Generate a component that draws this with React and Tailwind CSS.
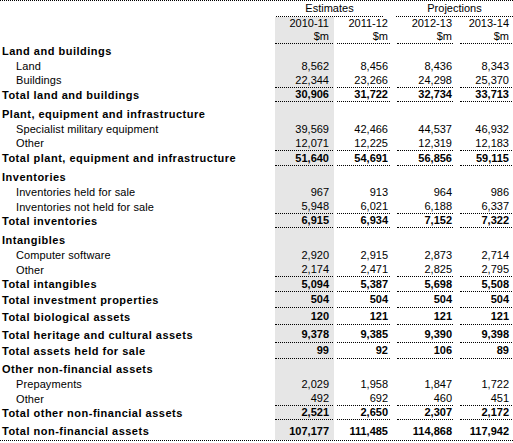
import React from "react";

const cols = [
    { outer: "bg-[#e6e6e6]", inner: "mr-[1px] pr-[4px]" },
    { outer: "", inner: "ml-[3px] mr-[3px] pr-[2px]" },
    { outer: "", inner: "ml-[4px] mr-[3px] pr-[1px]" },
    { outer: "", inner: "ml-[4px] mr-[1px] pr-[3px]" },
];

// h = row height in px (border included), kind sets font / border / indent
const rows = [
    { kind: "head", h: "h-[15px]", label: "Land and buildings" },
    { kind: "item", h: "h-[14px]", label: "Land", v: ["8,562", "8,456", "8,436", "8,343"] },
    { kind: "item", h: "h-[15px]", line: true, label: "Buildings", v: ["22,344", "23,266", "24,298", "25,370"] },
    { kind: "total", h: "h-[14px]", label: "Total land and buildings", v: ["30,906", "31,722", "32,734", "33,713"] },

    { kind: "head", h: "h-[20px]", label: "Plant, equipment and infrastructure" },
    { kind: "item", h: "h-[14px]", label: "Specialist military equipment", v: ["39,569", "42,466", "44,537", "46,932"] },
    { kind: "item", h: "h-[15px]", line: true, label: "Other", v: ["12,071", "12,225", "12,319", "12,183"] },
    { kind: "total", h: "h-[15px]", label: "Total plant, equipment and infrastructure", v: ["51,640", "54,691", "56,856", "59,115"] },

    { kind: "head", h: "h-[19px]", label: "Inventories" },
    { kind: "item", h: "h-[15px]", label: "Inventories held for sale", v: ["967", "913", "964", "986"] },
    { kind: "item", h: "h-[14px]", line: true, label: "Inventories not held for sale", v: ["5,948", "6,021", "6,188", "6,337"] },
    { kind: "total", h: "h-[14px]", label: "Total inventories", v: ["6,915", "6,934", "7,152", "7,322"] },

    { kind: "head", h: "h-[20px]", label: "Intangibles" },
    { kind: "item", h: "h-[15px]", label: "Computer software", v: ["2,920", "2,915", "2,873", "2,714"] },
    { kind: "item", h: "h-[14px]", line: true, label: "Other", v: ["2,174", "2,471", "2,825", "2,795"] },
    { kind: "total", h: "h-[15px]", label: "Total intangibles", v: ["5,094", "5,387", "5,698", "5,508"] },

    { kind: "single", h: "h-[16px]", label: "Total investment properties", v: ["504", "504", "504", "504"] },
    { kind: "single", h: "h-[17px]", label: "Total biological assets", v: ["120", "121", "121", "121"] },
    { kind: "single", h: "h-[18px]", label: "Total heritage and cultural assets", v: ["9,378", "9,385", "9,390", "9,398"] },
    { kind: "single", h: "h-[16px]", label: "Total assets held for sale", v: ["99", "92", "106", "89"] },

    { kind: "head", h: "h-[18px]", label: "Other non-financial assets" },
    { kind: "item", h: "h-[15px]", label: "Prepayments", v: ["2,029", "1,958", "1,847", "1,722"] },
    { kind: "item", h: "h-[14px]", line: true, label: "Other", v: ["492", "692", "460", "451"] },
    { kind: "total", h: "h-[14px]", label: "Total other non-financial assets", v: ["2,521", "2,650", "2,307", "2,172"] },

    { kind: "final", h: "h-[21px]", label: "Total non-financial assets", v: ["107,177", "111,485", "114,868", "117,942"] },
];

function Row({ r }) {
    const bold = r.kind !== "item";
    const lined = r.line || r.kind === "total" || r.kind === "single";
    let align = "items-center";
    if (r.kind === "head" || r.kind === "single") align = "items-end pb-[1px]";
    if (r.kind === "final") align = "items-end pb-[2px]";

    return (
        <div className={`grid grid-cols-[275px_59px_59px_63px_57px] ${r.h} ${r.kind === "final" ? "border-b border-dotted border-black" : ""}`}>
            <div className={`flex ${align} ${r.kind === "item" ? "pl-[16px] tracking-[0.1px]" : "pl-[2px] tracking-[0.5px]"} ${bold ? "font-bold" : ""} whitespace-nowrap`}>
                {r.label}
            </div>
            {cols.map((c, i) => (
                <div key={i} className={`h-full ${c.outer}`}>
                    <div className={`h-full flex ${align} justify-end ${c.inner} ${lined ? "border-b border-dotted border-black" : ""} ${bold ? "font-bold" : ""}`}>
                        {r.v ? r.v[i] : ""}
                    </div>
                </div>
            ))}
        </div>
    );
}

export default function App() {
    return (
        <div className="w-[513px] h-[443px] bg-white text-black text-[11px] leading-[13px] font-['Liberation_Sans',Arial,sans-serif] border-t border-dotted border-black overflow-hidden">
            {/* Estimates / Projections */}
            <div className="grid grid-cols-[275px_118px_120px] h-[16px]">
                <div />
                <div className="ml-[1px] mr-[10px] flex items-center justify-center border-b border-dotted border-black">Estimates</div>
                <div className="ml-[3px] flex items-center justify-center border-b border-dotted border-black">Projections</div>
            </div>
            <div className="grid grid-cols-[275px_59px_59px_63px_57px] h-[13px]">
                <div />
                {["2010-11", "2011-12", "2012-13", "2013-14"].map((y, i) => (
                    <div key={y} className={`h-full ${cols[i].outer}`}>
                        <div className={`h-full flex items-center justify-end ${cols[i].inner}`}>{y}</div>
                    </div>
                ))}
            </div>
            <div className="grid grid-cols-[275px_59px_59px_63px_57px] h-[14px]">
                <div />
                {cols.map((c, i) => (
                    <div key={i} className={`h-full ${c.outer}`}>
                        <div className={`h-full flex items-center justify-end border-b border-dotted border-black ${c.inner}`}>$m</div>
                    </div>
                ))}
            </div>
            {rows.map((r, i) => (
                <Row key={i} r={r} />
            ))}
        </div>
    );
}
